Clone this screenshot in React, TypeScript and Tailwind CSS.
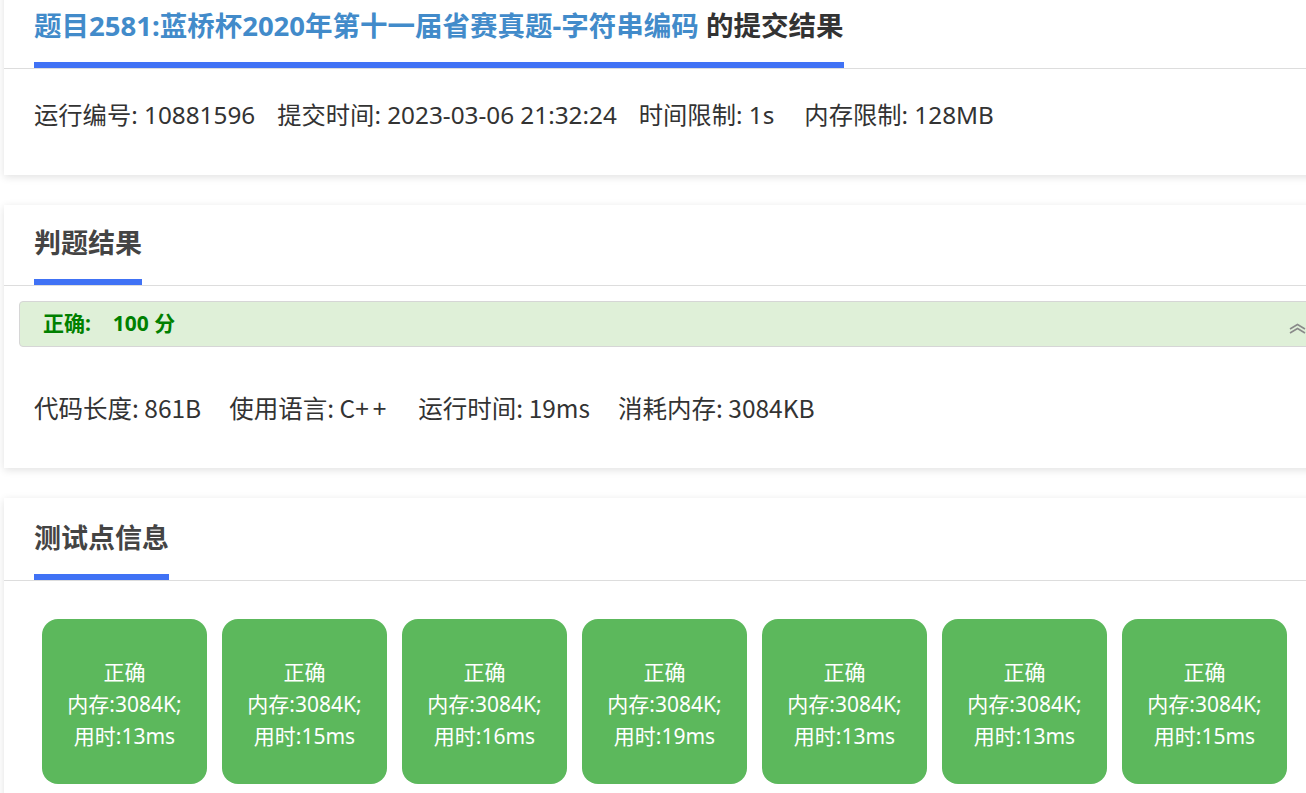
import { ReactNode } from 'react';

const sans = { fontFamily: '"Noto Sans", "Noto Sans CJK SC", sans-serif' };
const cjk = { fontFamily: '"Noto Sans CJK SC", sans-serif' };

const Panel = ({ title, children, first, top = 'pt-[18px]' }: { title: ReactNode; children: ReactNode; first?: boolean; top?: string }) => (
  <section
    className={`bg-white shadow-[0_2px_8px_rgba(0,0,0,0.12)] ${first ? '-mt-[12px]' : ''}`}
  >
    <div className={`border-b border-[#dddddd] px-[30px] ${top}`}>
      <h3 className="inline-block border-b-[6px] border-[#4072f5] pb-[16px] text-[27px] leading-[40px] font-bold text-[#444]">
        {title}
      </h3>
    </div>
    {children}
  </section>
);

const cases = [13, 15, 16, 19, 13, 13, 15];

const ChevronsUp = () => (
  <svg width="17" height="11" viewBox="0 0 17 11" fill="none" stroke="#8a8a8a" strokeWidth="1.6">
    <path d="M1 6 L8.5 1.5 L16 6" />
    <path d="M1 10 L8.5 5.5 L16 10" />
  </svg>
);

export default function App() {
  return (
    <div className="min-h-screen w-[1306px] overflow-hidden bg-white text-[#333]" style={sans}>
      <div className="ml-[4px] flex w-[1340px] flex-col gap-[30px]">
        <Panel
          first
          title={
            <span className="text-[27.5px]">
              <span className="text-[#428bca]">题目2581:蓝桥杯2020年第十一届省赛真题-字符串编码</span>{' '}
              <span className="text-[#333]">的提交结果</span>
            </span>
          }
        >
          <div className="flex gap-[22px] px-[30px] pt-[29px] pb-[43px] text-[24.3px] leading-[34px] text-[#333]">
            <span>运行编号: 10881596</span>
            <span>提交时间: 2023-03-06 21:32:24</span>
            <span>时间限制: 1s</span>
            <span className="ml-[8px]">内存限制: 128MB</span>
          </div>
        </Panel>

        <Panel title="判题结果">
          <div className="p-[15px]">
            <div className="flex h-[46px] items-center justify-between rounded-[4px] border border-[#d6d6d6] bg-[#dff0d8] pl-[23px] pr-[22px]">
              <span className="text-[21px] font-bold text-[#008000]">
                正确:&nbsp;&nbsp;&nbsp;&nbsp;100 分
              </span>
              <span className="mt-[8px]">
                <ChevronsUp />
              </span>
            </div>
            <div
              className="flex gap-[28px] px-[15px] pt-[44px] pb-[28px] text-[24.5px] leading-[34px] text-[#333]"
              style={cjk}
            >
              <span>代码长度: 861B</span>
              <span>
                使用语言: C<span className="tracking-[4px]">++</span>
              </span>
              <span>运行时间: 19ms</span>
              <span>消耗内存: 3084KB</span>
            </div>
          </div>
        </Panel>

        <Panel title="测试点信息" top="pt-[20px]">
          <div className="flex gap-[15px] px-[38px] pt-[38px] pb-[30px]">
            {cases.map((t, i) => (
              <div
                key={i}
                className="flex h-[165px] w-[165px] shrink-0 flex-col items-center justify-center rounded-[16px] bg-[#5cb85c] pt-[5px] text-[21px] leading-[32px] text-white"
              >
                <span>正确</span>
                <span>内存:3084K;</span>
                <span>用时:{t}ms</span>
              </div>
            ))}
          </div>
        </Panel>
      </div>
    </div>
  );
}
